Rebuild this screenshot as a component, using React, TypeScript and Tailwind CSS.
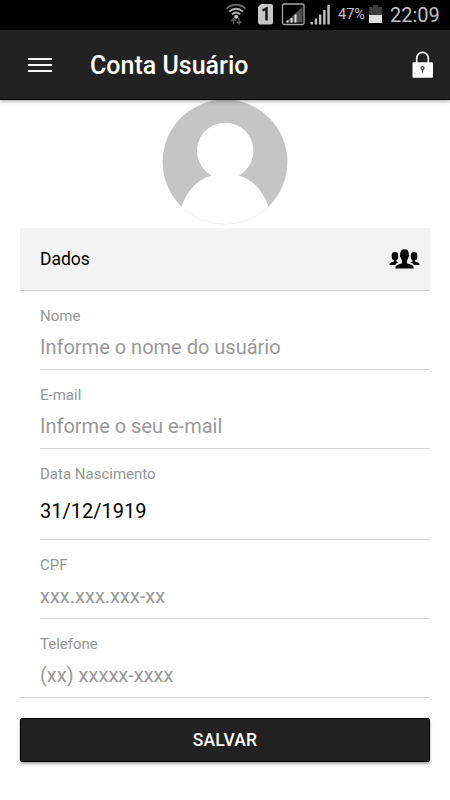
import { clsx } from "clsx";

type Field = {
  id: string;
  label: string;
  text: string;
  filled?: boolean;
};

const fields: Field[] = [
  {
    id: "nome",
    label: "Nome",
    text: "Informe o nome do usuário",
  },
  {
    id: "email",
    label: "E-mail",
    text: "Informe o seu e-mail",
  },
  {
    id: "nascimento",
    label: "Data Nascimento",
    text: "31/12/1919",
    filled: true,
  },
  {
    id: "cpf",
    label: "CPF",
    text: "xxx.xxx.xxx-xx",
  },
  {
    id: "telefone",
    label: "Telefone",
    text: "(xx) xxxxx-xxxx",
  },
];

function StatusIcons() {
  return (
    <svg width="110" height="30" viewBox="0 0 110 30" fill="none">
      {/* wifi */}
      <g stroke="#b4b4b4" strokeWidth="1.9">
        <path d="M1.5 8.8C7 3.4 15.2 3.4 20.7 8.8" stroke="#666" />
        <path d="M4.3 11.6C8.2 7.7 14 7.7 17.9 11.6" />
        <path d="M7 14.4C9.5 12 12.7 12 15.2 14.4" />
      </g>
      <circle cx="11.1" cy="16.8" r="2" fill="#c4c4c4" />
      <path
        d="M8.5 24.500V18.500M6.2 21L8.5 18.500L10.800 21M14 18V23.500M11.700 21.500L14 24L16.300 21.500"
        stroke="#5c5c5c"
        strokeWidth="1.4"
      />
      {/* sim card */}
      <path
        d="M36 4H46Q48 4 48 6V22.500Q48 24.500 46 24.500H35Q33 24.500 33 22.500V7Z"
        fill="#c6c6c6"
      />
      <path d="M37.5 10.500L41.500 8.500V20.500" stroke="#111" strokeWidth="2.4" />
      {/* signal, second sim */}
      <rect x="57.500" y="4" width="21.500" height="20.500" rx="1.500" stroke="#a9a9a9" strokeWidth="1.3" />
      <path d="M77.500 7V22.500H60Z" fill="#505050" />
      <path d="M61.500 20.500H63.500V22.500H61.500ZM65.500 18H67.500V22.500H65.500ZM69.500 14.500H71.500V22.500H69.500Z" fill="#ddd" />
      {/* signal */}
      <path
        d="M85.5 22H88V24.500H85.500ZM89.700 18.500H92.200V24.500H89.700ZM93.900 14.500H96.400V24.500H93.900ZM98.100 10H100.600V24.500H98.100ZM102.300 5H104.800V24.500H102.300Z"
        fill="#bdbdbd"
      />
    </svg>
  );
}

function LockIcon() {
  return (
    <svg width="22" height="28" viewBox="0 0 22 28" fill="none">
      <path d="M4.7 12V7.2A5.800 5.800 0 0 1 16.300 7.200V12" stroke="#f4f4f4" strokeWidth="1.7" />
      <rect x="0.500" y="11.200" width="20.500" height="15.500" rx="1" fill="#fff" />
      <circle cx="10.500" cy="17" r="1.500" stroke="#222" strokeWidth="1.1" />
      <path d="M10.5 18.500V21.500" stroke="#222" strokeWidth="1.2" />
    </svg>
  );
}

function Avatar() {
  return (
    <svg width="128" height="128" viewBox="0 0 128 128" className="mx-auto block">
      <circle cx="64" cy="63" r="62.300" fill="#fff" stroke="#f3f3f3" />
      <path
        d="M20.500 107.500A62.300 62.300 0 1 1 107.500 107.500C101.500 91 91.500 80.500 78 76.500A28.200 28.200 0 1 0 50.500 76.500C36.500 80.500 26.500 91 20.500 107.500Z"
        fill="#c5c5c5"
      />
    </svg>
  );
}

function PeopleIcon() {
  return (
    <svg width="31" height="22" viewBox="0 0 31 22" fill="#080808">
      <path d="M0.300 17Q0.300 14.900 2.500 14.300L5 13.500V12L3.200 11.500Q2.600 10 2.700 7Q2.700 4 6 4Q9 4 9.200 7Q9.300 10 8.700 11.500L7.400 12V13.500L9.500 14.200Q6.700 15.200 6.100 17Z" />
      <path d="M30.700 17Q30.700 14.900 28.500 14.300L26 13.500V12L27.800 11.500Q28.400 10 28.300 7Q28.300 4 25 4Q22 4 21.800 7Q21.700 10 22.300 11.500L23.600 12V13.500L21.500 14.200Q24.300 15.200 24.900 17Z" />
      <path d="M6.200 20.500Q6.200 17.500 8.700 16.700L13 15.200V12.500Q11.900 11.300 11.600 9.300Q10.800 8.800 10.800 7.500L11.200 6.700Q10.900 1.200 15.500 1.200Q20.100 1.200 19.800 6.700L20.200 7.500Q20.200 8.800 19.400 9.300Q19.100 11.300 18 12.500V15.200L22.300 16.700Q24.800 17.500 24.800 20.500Z" />
    </svg>
  );
}

function FieldRow({ field, last }: { field: Field; last: boolean }) {
  return (
    <div
      className={clsx(
        "border-b border-[#d5d5d5]",
        last ? "pl-5" : "ml-5",
        field.filled ? "h-[91px]" : "h-[79px]",
      )}
    >
      <p className="pt-[15px] text-[15px] leading-5 text-[#969696]">
        {field.label}
      </p>
      <p
        className={clsx(
          "text-[20px] leading-6",
          field.filled ? "mt-[15px] text-black" : "mt-[9px] text-[#999]",
        )}
      >
        {field.text}
      </p>
    </div>
  );
}

export default function App() {
  return (
    <div className="h-[800px] w-[450px] overflow-hidden bg-white font-[Roboto,sans-serif]">
      <div className="flex h-[30px] items-center bg-black pl-[225px] text-[#c0c0c0]">
        <StatusIcons />
        <span className="ml-[3px] w-[27px] text-[14.5px] leading-none whitespace-nowrap">
          47%
        </span>
        <svg width="13" height="20" viewBox="0 0 13 20" className="ml-[4px]">
          <path d="M4 0H9V2H13V10H0V2H4Z" fill="#3c3c3c" />
          <path d="M0 10H13V18H0Z" fill="#dedede" />
        </svg>
        <span className="ml-[8px] text-[20px] leading-none">22:09</span>
      </div>

      <header className="relative flex h-[70px] items-center border-b border-black bg-[#222] pr-[16px] pl-7 shadow-[0_1px_4px_rgba(0,0,0,0.4)]">
        <button type="button" className="flex w-6 flex-col gap-1">
          <span className="h-[2px] bg-[#f5f5f5]" />
          <span className="h-[2px] bg-[#f5f5f5]" />
          <span className="h-[2px] bg-[#f5f5f5]" />
        </button>
        <h1 className="ml-[38px] flex-1 pt-[2px] text-[25px] leading-8 font-medium text-white">
          Conta Usuário
        </h1>
        <LockIcon />
      </header>

      <main className="px-5">
        <div className="-mt-[1px] h-[129px]">
          <Avatar />
        </div>

        <section>
          <div className="flex h-[63px] items-center justify-between border-b border-[#cfcfcf] bg-[#f3f3f3] pr-[10px] pl-5">
            <h2 className="text-[17.5px] leading-6 text-black">Dados</h2>
            <PeopleIcon />
          </div>
          {fields.map((field, index) => (
            <FieldRow
              key={field.id}
              field={field}
              last={index === fields.length - 1}
            />
          ))}
        </section>

        <button
          type="button"
          className="mt-5 h-[44px] w-full rounded-[2px] border border-black bg-[#222] text-[17.5px] font-medium tracking-[0.2px] text-white shadow-[0_2px_3px_rgba(0,0,0,0.35)]"
        >
          SALVAR
        </button>
      </main>
    </div>
  );
}
